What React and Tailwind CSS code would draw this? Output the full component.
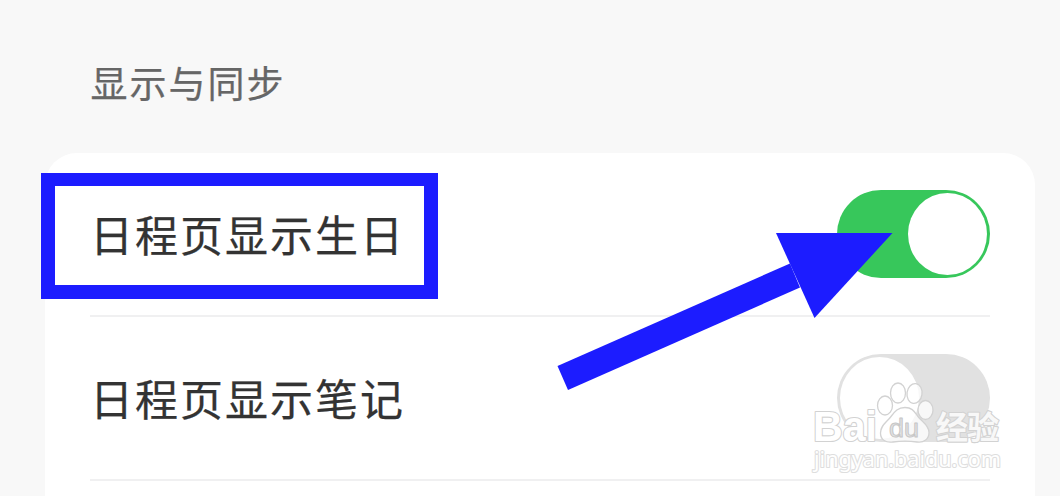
import React, { useState } from "react";
import clsx from "clsx";

const Toggle = ({ checked, onChange, label }) => (
  <button
    type="button"
    role="switch"
    aria-checked={checked}
    aria-label={label}
    onClick={onChange}
    className={clsx(
      "flex h-[88px] w-[153px] items-center rounded-full px-[3px]",
      checked ? "justify-end bg-[#37c75b]" : "justify-start bg-[#e1e1e1]"
    )}
  >
    <span className="h-[82px] w-[79px] rounded-[50%] bg-white" />
  </button>
);

const Watermark = () => (
  <svg
    className="absolute left-[800px] top-[370px]"
    width="220"
    height="110"
    viewBox="0 0 220 110"
    fill="#ffffff"
    stroke="#d2d2d2"
    strokeLinejoin="round"
  >
    <g fontFamily="'Liberation Sans', sans-serif" fontWeight="700" paintOrder="stroke" strokeWidth="2.2">
      <text x="13" y="70.5" fontSize="43" textLength="64" lengthAdjust="spacingAndGlyphs">
        Bai
      </text>
      <text
        x="136"
        y="69"
        fontSize="32"
        fontFamily="'Noto Sans CJK SC', sans-serif"
        textLength="63"
        fill="#f8f8f8"
      >
        经验
      </text>
    </g>

    {/* Paw */}
    <g fillOpacity="0.75" strokeWidth="1.3">
      <ellipse cx="85" cy="35.5" rx="7.5" ry="9.5" />
      <ellipse cx="98" cy="23" rx="7.5" ry="10" />
      <ellipse cx="114.5" cy="23.5" rx="7.5" ry="10" transform="rotate(8 114.5 23.5)" />
      <ellipse cx="125.5" cy="40" rx="7.5" ry="9.5" />
      <path d="M105 37.5C98 37.5 95 41 91 46.5C87 52 80.5 55 80.5 63C80.5 70 86 73 93 72C100 71 110 71 117 72C124 73 129 69 129 62.5C129 55 122 52 118 46.5C114 41 112 37.5 105 37.5Z" />
    </g>
    <text
      x="89"
      y="66.5"
      fontSize="26"
      fontFamily="'Liberation Sans', sans-serif"
      textLength="30"
      lengthAdjust="spacingAndGlyphs"
      fill="#e4e4e4"
      stroke="#c6c6c6"
      strokeWidth="1"
    >
      du
    </text>

    <text
      x="14"
      y="97"
      fontSize="21.5"
      fontFamily="'Noto Sans', sans-serif"
      textLength="187"
      lengthAdjust="spacingAndGlyphs"
      paintOrder="stroke"
      strokeWidth="2.2"
      stroke="#dedede"
    >
      jingyan.baidu.com
    </text>
  </svg>
);

const App = () => {
  const [settings, setSettings] = useState([
    { id: "birthday", label: "日程页显示生日", checked: true },
    { id: "note", label: "日程页显示笔记", checked: false },
  ]);

  const toggle = (id) => {
    setSettings((prev) =>
      prev.map((s) => (s.id === id ? { ...s, checked: !s.checked } : s))
    );
  };

  return (
    <div className="relative flex h-[496px] w-[1060px] flex-col overflow-hidden bg-[#f8f8f8] font-['Noto_Sans_CJK_SC',sans-serif]">
      <h2 className="flex h-[153px] shrink-0 items-center pl-[90.5px] pt-3 text-[37px] leading-none tracking-[2px] text-[#666666] [-webkit-text-stroke:0.25px_#666666]">
        显示与同步
      </h2>

      {/* Settings card */}
      <div className="ml-[45px] h-[400px] w-[990px] shrink-0 rounded-[32px] bg-white px-[45px]">
        {settings.map((s) => (
          <div
            key={s.id}
            className="flex h-[164px] items-center justify-between border-b-2 border-[#f0f0f1]"
          >
            <span className="pb-px text-[43px] leading-none tracking-[2px] text-[#333333] [-webkit-text-stroke:0.25px_#333333]">
              {s.label}
            </span>
            <Toggle checked={s.checked} label={s.label} onChange={() => toggle(s.id)} />
          </div>
        ))}
      </div>

      {/* Highlight frame */}
      <div className="pointer-events-none absolute left-[41px] top-[173px] h-[126px] w-[397px] border-[14px] border-t-[13px] border-[#1c1cff]" />

      {/* Arrow */}
      <svg
        className="pointer-events-none absolute left-[540px] top-[220px]"
        width="380"
        height="180"
        viewBox="0 0 380 180"
        fill="#1c1cff"
      >
        <path d="M17.5 146L250 43.5L260 67.5L28 170Z" />
        <path d="M236 13H352.5L274.5 98Z" />
      </svg>

      <div className="pointer-events-none">
        <Watermark />
      </div>
    </div>
  );
};

export default App;
